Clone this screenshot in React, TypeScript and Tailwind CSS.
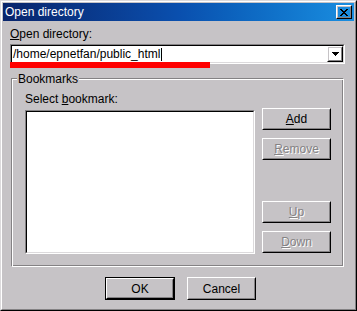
import React from "react";

const BG = "bg-[#c6c3c6]";

function Raised({
  className = "",
  children,
  isDefault = false,
}: {
  className?: string;
  children?: React.ReactNode;
  isDefault?: boolean;
}) {
  const inner = (
    <div className="w-full h-full flex border border-t-white border-l-white border-r-black border-b-black">
      <div className="flex-1 flex items-center justify-center border border-t-[#c6c3c6] border-l-[#c6c3c6] border-r-[#848284] border-b-[#848284]">
        {children}
      </div>
    </div>
  );
  if (isDefault) {
    return <div className={`border border-black flex ${className}`}>{inner}</div>;
  }
  return <div className={`flex ${className}`}>{inner}</div>;
}

function Disabled({ u, rest }: { u: string; rest: string }) {
  return (
    <span className="text-[#848284] [text-shadow:1px_1px_0_#ffffff]">
      <u className="underline">{u}</u>
      {rest}
    </span>
  );
}

function CloseGlyph() {
  const rows: number[][] = [
    [0, 1, 6, 7],
    [1, 2, 5, 6],
    [2, 3, 4, 5],
    [3, 4],
    [2, 3, 4, 5],
    [1, 2, 5, 6],
    [0, 1, 6, 7],
  ];
  return (
    <svg width="8" height="7" viewBox="0 0 8 7" shapeRendering="crispEdges">
      {rows.map((r, y) =>
        r.map((x) => <rect key={`${x}-${y}`} x={x} y={y} width="1" height="1" fill="#000" />)
      )}
    </svg>
  );
}

function ArrowGlyph() {
  return (
    <svg width="7" height="4" viewBox="0 0 7 4" shapeRendering="crispEdges">
      <rect x="0" y="0" width="7" height="1" fill="#000" />
      <rect x="1" y="1" width="5" height="1" fill="#000" />
      <rect x="2" y="2" width="3" height="1" fill="#000" />
      <rect x="3" y="3" width="1" height="1" fill="#000" />
    </svg>
  );
}

export default function App() {
  return (
    <div className="w-[357px] h-[311px] border border-t-[#dcdadc] border-l-[#dcdadc] border-r-black border-b-black font-['Liberation_Sans',Arial,sans-serif] text-[12px] leading-[14px] text-black">
      <div className={`w-full h-full border border-t-white border-l-white border-r-[#848284] border-b-[#848284] ${BG} p-px flex flex-col`}>
        {/* Title bar */}
        <div className="h-[18px] shrink-0 flex items-center bg-linear-to-r from-[#08246b] via-[#0a4fae] to-[#1a8ee0] pl-[2px] pr-[2px]">
          <span className="flex-1 text-white">Open directory</span>
          <Raised className="w-[16px] h-[14px]">
            <CloseGlyph />
          </Raised>
        </div>

        {/* Label */}
        <div className="ml-[7px] mt-[6px] h-[14px]">
          <u className="underline">O</u>pen directory:
        </div>

        {/* Combo */}
        <div className="relative ml-[7px] mt-[3px] w-[335px] h-[20px]">
          <div className="w-full h-full flex border border-t-[#848284] border-l-[#848284] border-r-white border-b-white">
            <div className="flex-1 flex bg-white border border-t-black border-l-black border-r-[#dcdadc] border-b-[#dcdadc]">
              <div className="flex-1 flex items-center pl-px">
                <span>/home/epnetfan/public_html</span>
                <span className="ml-px w-px h-[13px] bg-black" />
              </div>
              <Raised className="w-[16px] h-[16px]">
                <ArrowGlyph />
              </Raised>
            </div>
          </div>
          <div className="absolute left-0 top-[18px] w-[200px] h-[6px] bg-[#ff0000]" />
        </div>

        {/* Group box */}
        <div className="relative ml-[8px] mt-[14px] w-[333px] h-[189px] border border-t-[#848284] border-l-[#848284] border-r-white border-b-white shadow-[inset_1px_1px_0_#ffffff,inset_-1px_-1px_0_#848284]">
          <span className={`absolute left-[5px] top-[-7px] px-px ${BG}`}>Bookmarks</span>
          <div className="flex">
            <div className="flex flex-col pl-[13px]">
              <div className="mt-[13px] h-[14px]">
                Select <u className="underline">b</u>ookmark:
              </div>
              <div className="mt-[4px] w-[230px] h-[144px] flex border border-t-[#848284] border-l-[#848284] border-r-white border-b-white">
                <div className="flex-1 bg-white border border-t-black border-l-black border-r-[#dcdadc] border-b-[#dcdadc]" />
              </div>
            </div>
            <div className="flex flex-col ml-[7px]">
              <Raised className="mt-[29px] w-[69px] h-[22px]">
                <span>
                  <u className="underline">A</u>dd
                </span>
              </Raised>
              <Raised className="mt-[8px] w-[69px] h-[22px]">
                <Disabled u="R" rest="emove" />
              </Raised>
              <Raised className="mt-[41px] w-[69px] h-[22px]">
                <Disabled u="U" rest="p" />
              </Raised>
              <Raised className="mt-[8px] w-[69px] h-[22px]">
                <Disabled u="D" rest="own" />
              </Raised>
            </div>
          </div>
        </div>

        {/* Bottom buttons */}
        <div className="flex mt-[10px] ml-[102px]">
          <Raised isDefault className="w-[70px] h-[23px]">
            <span>OK</span>
          </Raised>
          <Raised className="ml-[12px] w-[69px] h-[23px]">
            <span>Cancel</span>
          </Raised>
        </div>
      </div>
    </div>
  );
}
